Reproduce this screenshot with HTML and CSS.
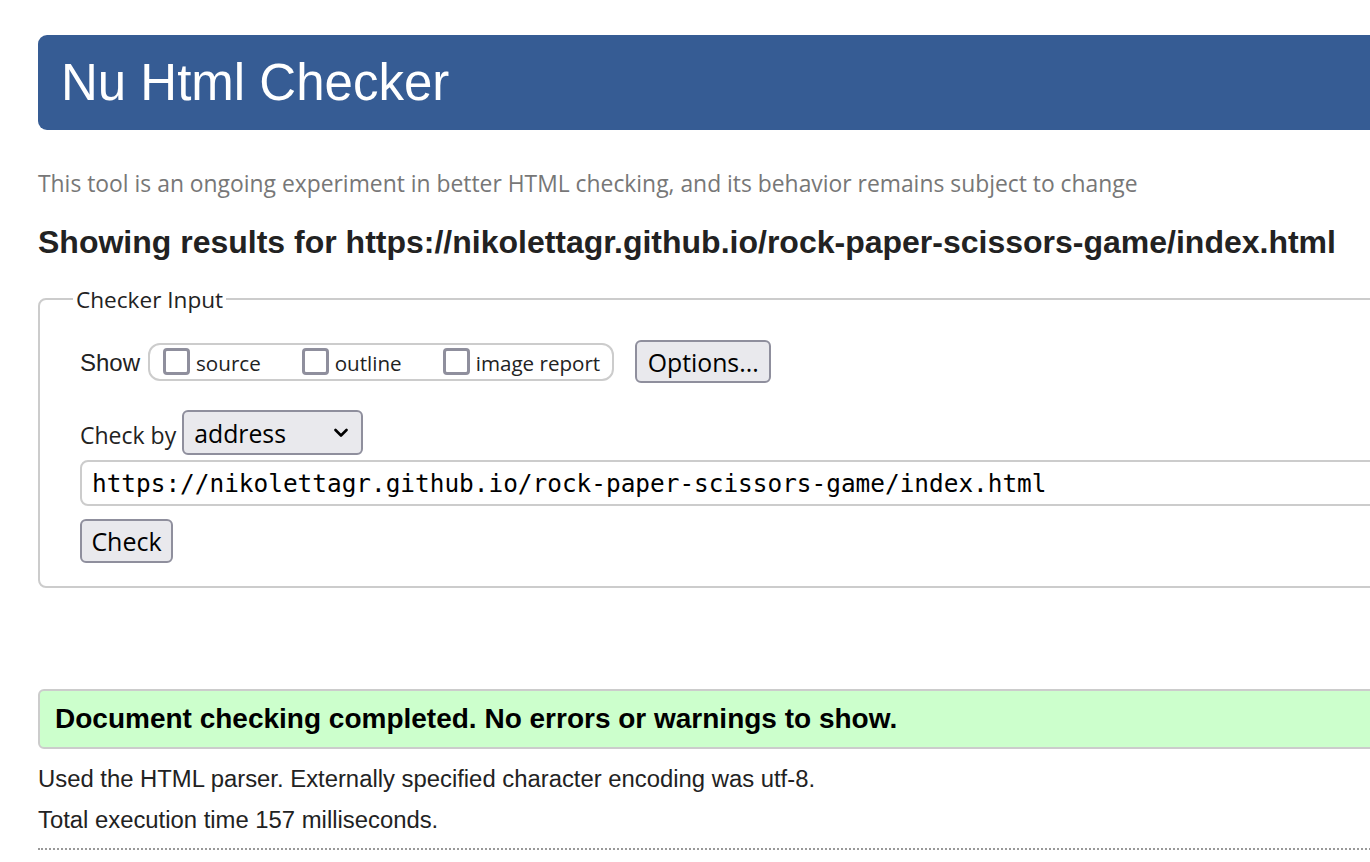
FILE: index.html
```html
<!DOCTYPE html>
<html lang="en">
<head>
<meta charset="utf-8">
<title>Nu Html Checker</title>
<link rel="stylesheet" href="styles.css">
</head>
<body>
<div class="page">
  <header class="banner"><h1 class="banner-title">Nu Html Checker</h1></header>
  <p class="about">This tool is an ongoing experiment in better HTML checking, and its behavior remains subject to change</p>
  <h2 class="results-for">Showing results for https://nikolettagr.github.io/rock-paper-scissors-game/index.html</h2>
  <form class="checker-form">
    <fieldset class="checker-input">
      <legend class="legend">Checker Input</legend>
      <div class="row show-row">
        <span class="row-label">Show</span>
        <div class="show-group">
          <label class="opt"><input type="checkbox" class="cb"><span>source</span></label>
          <label class="opt"><input type="checkbox" class="cb"><span>outline</span></label>
          <label class="opt last"><input type="checkbox" class="cb"><span>image report</span></label>
        </div>
        <button type="button" class="btn options-btn">Options...</button>
      </div>
      <div class="row checkby-row">
        <span class="row-label form-font">Check by</span>
        <span class="select-wrap">
          <select class="select"><option>address</option></select>
          <svg class="chevron" width="14" height="10" viewBox="0 0 14 10"><path d="M1.5 2 L7 7.5 L12.5 2" fill="none" stroke="#000" stroke-width="2.6" stroke-linecap="round" stroke-linejoin="round"/></svg>
        </span>
      </div>
      <input class="url-input" type="text" value="https://nikolettagr.github.io/rock-paper-scissors-game/index.html">
      <div class="row">
        <button type="button" class="btn check-btn">Check</button>
      </div>
    </fieldset>
  </form>
  <div class="success">Document checking completed. No errors or warnings to show.</div>
  <p class="details">Used the HTML parser. Externally specified character encoding was utf-8.</p>
  <p class="details second">Total execution time 157 milliseconds.</p>
  <div class="dotted"></div>
</div>
</body>
</html>
```

FILE: styles.css
```css
html { overflow: hidden; }
body {
  margin: 0;
  font-family: "Liberation Sans", Arial, sans-serif;
  color: #222;
  background: #fff;
}
.page {
  width: 1380px;
  margin-left: 38px;
  padding-top: 35px;
}
.banner {
  height: 95px;
  background: #365c94;
  border-radius: 9px;
  padding-left: 23px;
}
.banner-title {
  margin: 0;
  font-weight: normal;
  font-size: 51px;
  line-height: 95px;
  color: #fff;
}
.about {
  margin: 39px 0 0;
  font-family: "Open Sans", "Noto Sans", sans-serif;
  font-size: 22.86px;
  line-height: 30px;
  color: #777;
}
.results-for {
  margin: 25px 0 0;
  font-size: 32px;
  line-height: 36px;
  font-weight: bold;
  color: #222;
}
.checker-form { margin: 24px 0 0; }
.checker-input {
  margin: 0;
  border: 2px solid #ccc;
  border-radius: 8px;
  padding: 0 0 23px 40px;
}
.legend {
  font-family: "Open Sans", "Noto Sans", sans-serif;
  font-size: 22.6px;
  line-height: 28px;
  padding: 2px 3px 0;
  margin-left: -7px;
  color: #222;
}
.row {
  display: flex;
  align-items: center;
}
.show-row { margin-top: 26px; height: 43px; }
.row-label {
  font-size: 24px;
  margin-right: 8px;
  padding-top: 3px;
}
.form-font {
  font-family: "Open Sans", "Noto Sans", sans-serif;
  font-size: 23px;
  margin-right: 6px;
  padding-top: 4px;
}
.show-group {
  display: flex;
  align-items: center;
  height: 34px;
  border: 2px solid #ccc;
  border-radius: 12px;
  padding: 0 12px 0 13px;
  margin-right: 21px;
}
.opt {
  display: flex;
  align-items: center;
  font-family: "Open Sans", "Noto Sans", sans-serif;
  font-size: 20.6px;
  color: #222;
  margin-right: 41px;
}
.opt span { padding-top: 2px; }
.opt.last { margin-right: 0; }
.cb {
  appearance: none;
  -webkit-appearance: none;
  width: 27px;
  height: 27px;
  margin: 0 6px 0 0;
  border: 3px solid #8f8f9d;
  border-radius: 4px;
  background: #fff;
}
.btn {
  font-family: "Open Sans", "Noto Sans", sans-serif;
  background: #e9e9ed;
  border: 2px solid #8f8f9d;
  border-radius: 6px;
  color: #000;
  margin: 0;
}
.options-btn {
  width: 136px;
  height: 43px;
  font-size: 24.8px;
  padding: 0;
}
.checkby-row { margin-top: 27px; }
.select-wrap {
  position: relative;
  display: inline-block;
}
.select {
  appearance: none;
  -webkit-appearance: none;
  width: 181px;
  height: 45px;
  font-family: "Open Sans", "Noto Sans", sans-serif;
  font-size: 24.8px;
  padding: 0 0 0 10px;
  background: #e9e9ed;
  border: 2px solid #8f8f9d;
  border-radius: 6px;
  color: #000;
  margin: 0;
}
.chevron {
  position: absolute;
  left: 152px;
  top: 18px;
  pointer-events: none;
}
.url-input {
  display: block;
  box-sizing: border-box;
  width: 1400px;
  height: 46px;
  margin: 5px 0 0;
  padding: 0 10px;
  border: 2px solid #ccc;
  border-radius: 8px;
  font-family: "DejaVu Sans Mono", "Liberation Mono", monospace;
  font-size: 24.4px;
  color: #000;
  background: #fff;
}
.check-btn {
  margin-top: 13px;
  width: 93px;
  height: 44px;
  font-size: 25px;
  padding: 0;
}
.success {
  margin-top: 101px;
  height: 56px;
  line-height: 56px;
  background: #ccffcc;
  border: 2px solid #ccc;
  border-radius: 6px;
  padding-left: 15px;
  font-size: 28px;
  font-weight: bold;
  color: #000;
}
.details {
  margin: 16px 0 0;
  font-size: 23.85px;
  line-height: 28px;
  color: #222;
}
.details.second { margin-top: 13px; }
.dotted {
  margin-top: 14px;
  border-top: 2px dotted #999;
}
```
